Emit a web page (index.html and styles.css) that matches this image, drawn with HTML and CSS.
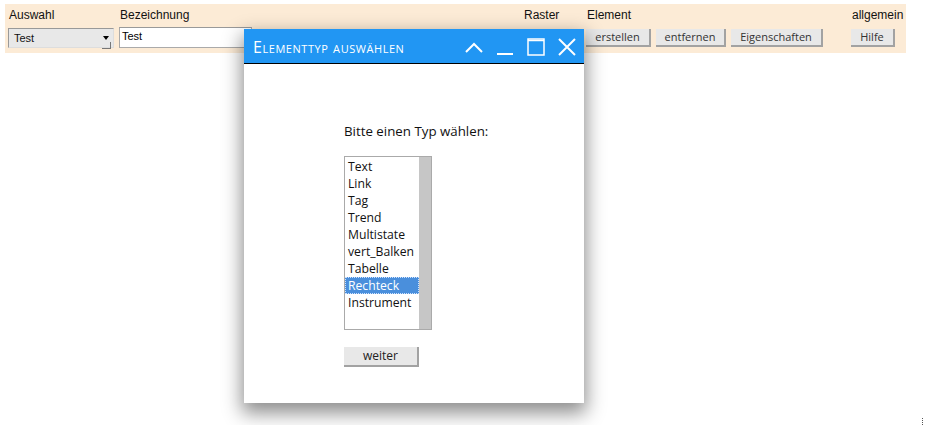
FILE: index.html
```html
<!DOCTYPE html>
<html>
<head>
<meta charset="utf-8">
<link rel="stylesheet" href="styles.css">
</head>
<body>
<div class="bar">
  <div class="col c1">
    <div class="lbl">Auswahl</div>
    <div class="sel"><span>Test</span><i class="arr"></i></div>
  </div>
  <div class="col c2">
    <div class="lbl">Bezeichnung</div>
    <div class="inp">Test</div>
  </div>
  <div class="col c3">
    <div class="lbl">Raster</div>
    <div class="btn rb">&nbsp;</div>
  </div>
  <div class="col c4">
    <div class="lbl">Element</div>
    <div class="btns">
      <div class="btn b1">erstellen</div>
      <div class="btn b2">entfernen</div>
      <div class="btn b3">Eigenschaften</div>
    </div>
  </div>
  <div class="col c5">
    <div class="lbl">allgemein</div>
    <div class="btn b4">Hilfe</div>
  </div>
</div>

<div class="dlg">
  <div class="title">
    <span class="ttext">Elementtyp auswählen</span>
    <div class="icons">
      <svg width="20" height="20" viewBox="0 0 20 20"><path d="M2 15 L10 7 L18 15" fill="none" stroke="#fff" stroke-width="2"/></svg>
      <svg width="20" height="20" viewBox="0 0 20 20"><path d="M2 17 H18" fill="none" stroke="#fff" stroke-width="2"/></svg>
      <svg width="20" height="20" viewBox="0 0 20 20"><rect x="2" y="2" width="16" height="16" fill="none" stroke="#fff" stroke-width="1.5"/><path d="M2 3.5 H18" stroke="#fff" stroke-width="1.5"/></svg>
      <svg width="20" height="20" viewBox="0 0 20 20"><path d="M2 2 L18 18 M18 2 L2 18" fill="none" stroke="#fff" stroke-width="2"/></svg>
    </div>
  </div>
  <div class="body">
    <div class="prompt">Bitte einen Typ wählen:</div>
    <div class="list">
      <div class="items">
        <div class="it">Text</div>
        <div class="it">Link</div>
        <div class="it">Tag</div>
        <div class="it">Trend</div>
        <div class="it">Multistate</div>
        <div class="it">vert_Balken</div>
        <div class="it">Tabelle</div>
        <div class="it on">Rechteck</div>
        <div class="it">Instrument</div>
      </div>
      <div class="sb"></div>
    </div>
    <div class="btn weiter">weiter</div>
  </div>
</div>
<div class="grip"></div>
</body>
</html>
```
FILE: styles.css
```css
html, body { margin: 0; padding: 0; background: #fff; }
body { width: 927px; height: 425px; position: relative; overflow: hidden; font-family: "Liberation Sans", Arial, sans-serif; }

.bar {
  margin: 4px 0 0 5px;
  width: 898px;
  height: 49px;
  padding-left: 3px;
  background: #fcebd6;
  display: flex;
}
.col { display: flex; flex-direction: column; }
.c1 { width: 111px; }
.c2 { width: 404px; }
.c3 { width: 63px; }
.c4 { width: 265px; }
.c5 { width: 55px; }
.lbl { font-size: 12px; color: #111; height: 24px; line-height: 22px; padding-left: 1px; }

.sel {
  width: 106px; height: 20px; box-sizing: border-box;
  background: #e8e8e8;
  border-top: 1px solid #999; border-left: 1px solid #999;
  border-right: 1px solid #ddd; border-bottom: 1px solid #ddd;
  font-size: 11px; color: #111;
  display: flex; align-items: center; justify-content: space-between;
  padding: 0 4px 0 5px;
}
.arr { width: 0; height: 0; border-left: 3px solid transparent; border-right: 3px solid transparent; border-top: 4px solid #000; position: relative; }
.arr::after { content: ""; position: absolute; left: -4px; top: 2px; width: 8px; height: 6px; border-right: 1px solid #777; border-bottom: 1px solid #777; }
.inp {
  width: 133px; height: 21px; box-sizing: border-box;
  background: #fff; border: 1px solid #aaa; border-top-color: #999;
  font-size: 11px; color: #000; padding: 2px 0 0 2px;
  margin-top: -1px;
}

.btns { display: flex; gap: 5px; }
.btn {
  height: 18px; box-sizing: border-box;
  background: #e8e8e8;
  border-right: 2px solid #a2a2a2; border-bottom: 2px solid #a2a2a2;
  font-family: "Open Sans", "Noto Sans", sans-serif; font-size: 11px; color: #333;
  line-height: 16px; text-align: center;
  margin-top: 1px;
}
.rb { width: 28px; }
.b1 { width: 65px; }
.b2 { width: 70px; }
.b3 { width: 92px; }
.b4 { width: 44px; }

.dlg {
  position: absolute; left: 244px; top: 29px;
  width: 340px; height: 374px;
  background: #fff;
  box-shadow: 0 8px 18px 2px rgba(0,0,0,0.45);
  display: flex; flex-direction: column;
}
.title {
  height: 34px; background: #2196f3;
  border-bottom: 1px solid #000;
  display: flex; align-items: center; justify-content: space-between;
  padding: 0 7px 0 9px;
}
.ttext { color: #fff; font-family: "Open Sans", "DejaVu Sans", sans-serif; font-size: 16px; font-variant: small-caps; letter-spacing: 0.55px; margin-top: 2px; }
.icons { display: flex; gap: 11px; align-items: center; margin-top: 1px; }
.icons svg { display: block; }

.body { padding: 57px 0 0 100px; display: flex; flex-direction: column; align-items: flex-start; }
.prompt { font-family: "Open Sans", "Noto Sans", sans-serif; font-size: 13.3px; color: #111; height: 20px; line-height: 20px; }
.list {
  margin-top: 15px;
  width: 88px; height: 174px; box-sizing: border-box;
  border: 1px solid #aaa;
  display: flex;
}
.items { flex: 1; padding-top: 1px; }
.it { font-family: "Open Sans", "Noto Sans", sans-serif; font-size: 12.2px; color: #111; height: 17px; line-height: 17px; padding-left: 3px; }
.it.on { background: #4a8fdc; color: #fff; outline: 1px dotted #cfe3ff; outline-offset: -1px; }
.sb { width: 12px; background: #c6c6c6; }
.weiter { margin-top: 17px; width: 75px; height: 20px; font-size: 12px; line-height: 18px; color: #222; }

.grip { position: absolute; left: 922px; top: 418px; width: 1px; height: 7px; background: repeating-linear-gradient(#555 0 1px, transparent 1px 2px); }
```
